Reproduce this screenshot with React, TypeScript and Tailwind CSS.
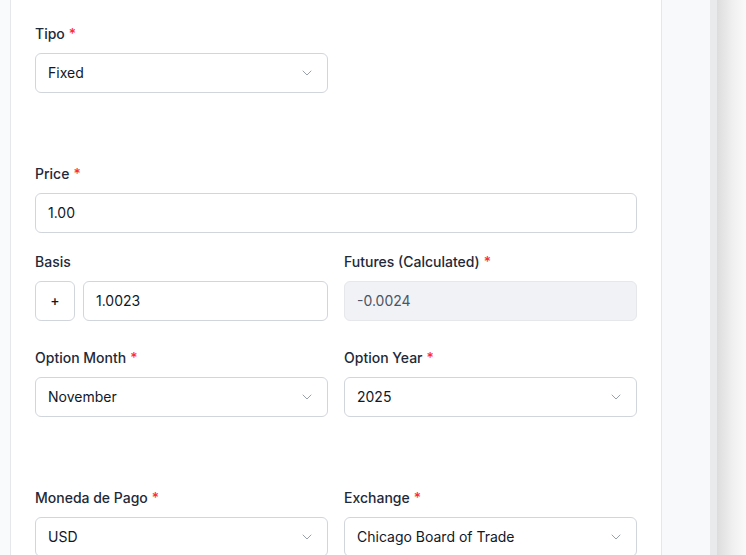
import { ChevronDown } from 'lucide-react'

function Label({ text, required }: { text: string; required?: boolean }) {
  return (
    <label className="block text-sm leading-5 font-medium text-gray-800">
      {text}
      {required && <span className="ml-1 text-red-500">*</span>}
    </label>
  )
}

function SelectBox({ value }: { value: string }) {
  return (
    <div className="flex h-10 items-center justify-between rounded-md border border-gray-300 bg-white px-3 text-sm text-gray-900">
      <span>{value}</span>
      <ChevronDown className="size-4 text-gray-400" strokeWidth={1.5} />
    </div>
  )
}

function TextBox({ value, disabled }: { value: string; disabled?: boolean }) {
  return (
    <div
      className={`flex h-10 items-center rounded-md border px-3 text-sm ${
        disabled ? 'border-gray-200 bg-[#f1f2f5] text-gray-600' : 'border-gray-300 bg-white text-gray-900'
      }`}
    >
      {value}
    </div>
  )
}

function Field({
  label,
  required,
  children,
}: {
  label: string
  required?: boolean
  children: React.ReactNode
}) {
  return (
    <div className="flex flex-col gap-[9px]">
      <Label text={label} required={required} />
      {children}
    </div>
  )
}

export default function App() {
  return (
    <div
      className="flex h-[555px] w-[746px] overflow-hidden bg-white"
      style={{ fontFamily: 'Inter, "Noto Sans", sans-serif' }}
    >
      <div className="w-[11px] shrink-0 border-r border-gray-200 bg-gray-50" />
      <div className="w-[651px] shrink-0 border-r border-gray-200 bg-white px-6 pt-6">
        <div className="w-[293px]">
          <Field label="Tipo" required>
            <SelectBox value="Fixed" />
          </Field>
        </div>

        <div className="mt-[71px]">
          <Field label="Price" required>
            <TextBox value="1.00" />
          </Field>
        </div>

        <div className="mt-[19px] grid grid-cols-2 gap-4">
          <Field label="Basis">
            <div className="flex gap-2">
              <div className="flex h-10 w-10 shrink-0 items-center justify-center rounded-md border border-gray-300 bg-white text-sm font-medium text-gray-900">
                +
              </div>
              <div className="flex-1">
                <TextBox value="1.0023" />
              </div>
            </div>
          </Field>
          <Field label="Futures (Calculated)" required>
            <TextBox value="-0.0024" disabled />
          </Field>
        </div>

        <div className="mt-[27px] grid grid-cols-2 gap-4">
          <Field label="Option Month" required>
            <SelectBox value="November" />
          </Field>
          <Field label="Option Year" required>
            <SelectBox value="2025" />
          </Field>
        </div>

        <div className="mt-[71px] grid grid-cols-2 gap-4">
          <Field label="Moneda de Pago" required>
            <SelectBox value="USD" />
          </Field>
          <Field label="Exchange" required>
            <SelectBox value="Chicago Board of Trade" />
          </Field>
        </div>
      </div>
      <div className="w-[48px] shrink-0 bg-[#f8f9fb]" />
      <div className="w-[8px] shrink-0 border-r border-[#dcdde0] bg-[#e9eaec]" />
      <div className="flex-1 bg-gradient-to-r from-[#dedede] via-[#efefef] to-[#fafafa]" />
    </div>
  )
}
